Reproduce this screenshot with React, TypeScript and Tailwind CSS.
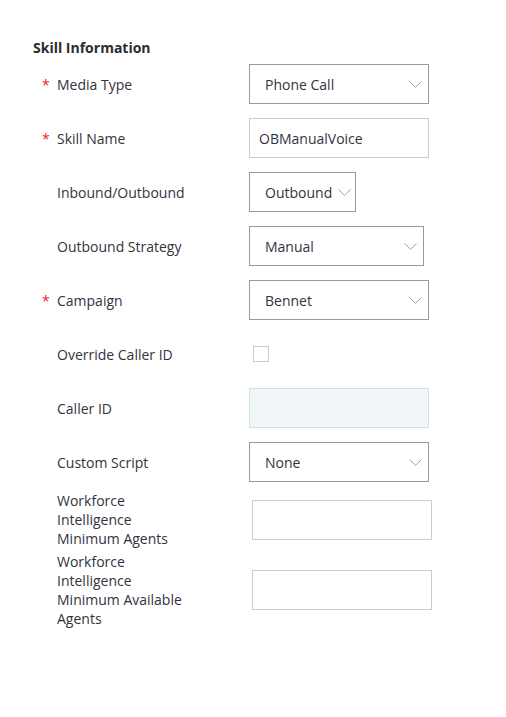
const Chevron = () => (
  <svg width="13" height="7" viewBox="0 0 13 7" fill="none" className="shrink-0">
    <path d="M0.5 0.5 L6.5 6.3 L12.5 0.5" stroke="#97a4b0" strokeWidth="1" />
  </svg>
);

const Required = () => <span className="w-6 pl-[9px] text-[14px] text-[#e8242b]">*</span>;
const Blank = () => <span className="w-6" />;

const Select = ({ value, width }: { value: string; width: string }) => (
  <div
    className={`${width} h-10 border border-[#8e9cab] bg-white flex items-center justify-between pl-[15px] pr-[6px]`}
  >
    <span>{value}</span>
    <Chevron />
  </div>
);

const App = () => {
  return (
    <div
      className="w-[506px] h-[717px] bg-white text-[14px] text-[#333340] px-[33px] pt-[38px]"
      style={{ fontFamily: '"Open Sans", "Liberation Sans", sans-serif' }}
    >
      <h3 className="text-[14px] font-bold leading-5 text-[#2b2b33]">Skill Information</h3>

      <div className="mt-[6px] flex flex-col gap-[14px]">
        {/* Media Type */}
        <div className="flex items-center h-10">
          <Required />
          <span className="w-[192px]">Media Type</span>
          <Select value="Phone Call" width="w-[180px]" />
        </div>

        {/* Skill Name */}
        <div className="flex items-center h-10">
          <Required />
          <span className="w-[192px]">Skill Name</span>
          <div className="w-[180px] h-10 border border-[#c4ced6] flex items-center px-[9px]">OBManualVoice</div>
        </div>

        {/* Inbound/Outbound */}
        <div className="flex items-center h-10">
          <Blank />
          <span className="w-[192px]">Inbound/Outbound</span>
          <div className="w-[107px] h-10 border border-[#8e9cab] flex items-center pl-[15px] gap-[6px]">
            <span>Outbound</span>
            <Chevron />
          </div>
        </div>

        {/* Outbound Strategy */}
        <div className="flex items-center h-10">
          <Blank />
          <span className="w-[192px]">Outbound Strategy</span>
          <Select value="Manual" width="w-[175px]" />
        </div>

        {/* Campaign */}
        <div className="flex items-center h-10">
          <Required />
          <span className="w-[192px]">Campaign</span>
          <Select value="Bennet" width="w-[180px]" />
        </div>

        {/* Override Caller ID */}
        <div className="flex items-center h-10">
          <Blank />
          <span className="w-[196px]">Override Caller ID</span>
          <div className="w-4 h-4 border border-[#c4ced6] bg-white" />
        </div>

        {/* Caller ID */}
        <div className="flex items-center h-10">
          <Blank />
          <span className="w-[192px]">Caller ID</span>
          <div className="w-[180px] h-10 border border-[#d3dde3] bg-[#f1f6f9]" />
        </div>

        {/* Custom Script */}
        <div className="flex items-center h-10">
          <Blank />
          <span className="w-[192px]">Custom Script</span>
          <Select value="None" width="w-[180px]" />
        </div>
      </div>

      {/* Workforce Intelligence */}
      <div className="mt-[9px] flex items-center leading-[19px]">
        <Blank />
        <span className="w-[195px] pr-[62px]">Workforce Intelligence Minimum Agents</span>
        <div className="w-[180px] h-10 border border-[#c4ced6]" />
      </div>
      <div className="mt-[4px] flex items-center leading-[19px]">
        <Blank />
        <span className="w-[195px] pr-[62px]">Workforce Intelligence Minimum Available Agents</span>
        <div className="w-[180px] h-10 border border-[#c4ced6]" />
      </div>
    </div>
  );
};

export default App;
